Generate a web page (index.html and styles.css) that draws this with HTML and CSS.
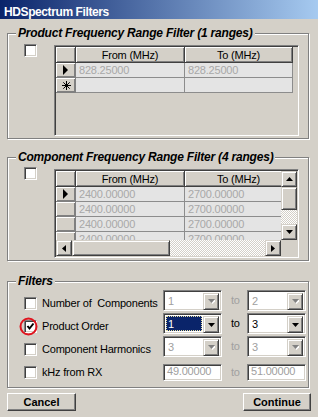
FILE: index.html
```html
<!DOCTYPE html>
<html>
<head>
    <title>HDSpectrum Filters</title>
    <link rel="stylesheet" href="styles.css">
</head>
<body>
<div class="window">
    <div class="titlebar">HDSpectrum Filters</div>

    <div class="content">
        <div class="group group-product">
            <span class="legend">Product Frequency Range Filter (1 ranges)</span>
            <div class="group-row">
                <span class="check"></span>
                <div class="grid grid-product">
                    <div class="table">
                        <div class="hd"></div>
                        <div class="hd">From (MHz)</div>
                        <div class="hd">To (MHz)</div>
                        <div class="rh"><svg width="6" height="10" viewBox="0 0 6 10"><polygon points="0,0 5,5 0,10" fill="#000"/></svg></div>
                        <div class="cell">828.25000</div>
                        <div class="cell">828.25000</div>
                        <div class="rh"><svg width="9" height="9" viewBox="0 0 9 9"><path d="M4.5 0V9M0 4.5H9M1.3 1.3L7.7 7.7M7.7 1.3L1.3 7.7" stroke="#000" stroke-width="1"/></svg></div>
                        <div class="cell"></div>
                        <div class="cell"></div>
                    </div>
                </div>
            </div>
        </div>

        <div class="group group-comp">
            <span class="legend">Component Frequency Range Filter (4 ranges)</span>
            <div class="group-row">
                <span class="check"></span>
                <div class="grid grid-comp">
                    <div class="scroll-area">
                        <div class="viewport">
                            <div class="table">
                                <div class="hd"></div>
                                <div class="hd">From (MHz)</div>
                                <div class="hd">To (MHz)</div>
                                <div class="rh"><svg width="6" height="10" viewBox="0 0 6 10"><polygon points="0,0 5,5 0,10" fill="#000"/></svg></div>
                                <div class="cell">2400.00000</div>
                                <div class="cell">2700.00000</div>
                                <div class="rh"></div>
                                <div class="cell">2400.00000</div>
                                <div class="cell">2700.00000</div>
                                <div class="rh"></div>
                                <div class="cell">2400.00000</div>
                                <div class="cell">2700.00000</div>
                                <div class="rh"></div>
                                <div class="cell">2400.00000</div>
                                <div class="cell">2700.00000</div>
                            </div>
                        </div>
                        <div class="vscroll">
                            <span class="sbtn"><svg width="7" height="4" viewBox="0 0 7 4"><polygon points="3.5,0 7,4 0,4" fill="#000"/></svg></span>
                            <span class="thumb v-thumb"></span>
                            <span class="track"></span>
                            <span class="sbtn"><svg width="7" height="4" viewBox="0 0 7 4"><polygon points="0,0 7,0 3.5,4" fill="#000"/></svg></span>
                        </div>
                        <div class="hscroll">
                            <span class="sbtn"><svg width="4" height="7" viewBox="0 0 4 7"><polygon points="4,0 4,7 0,3.5" fill="#000"/></svg></span>
                            <span class="thumb h-thumb"></span>
                            <span class="track"></span>
                            <span class="sbtn"><svg width="4" height="7" viewBox="0 0 4 7"><polygon points="0,0 4,3.5 0,7" fill="#000"/></svg></span>
                        </div>
                        <div class="corner"></div>
                    </div>
                </div>
            </div>
        </div>

        <div class="group group-filters">
            <span class="legend">Filters</span>

            <div class="filter-row">
                <label class="opt"><span class="check"></span>Number of&nbsp; Components</label>
                <div class="combo disabled"><span class="val">1</span><span class="dd"><svg width="7" height="5" viewBox="0 0 7 5"><polygon points="1,1 8,1 4.5,5" fill="#fff"/><polygon points="0,0 7,0 3.5,4" fill="#808080"/></svg></span></div>
                <span class="to disabled">to</span>
                <div class="combo disabled"><span class="val">2</span><span class="dd"><svg width="7" height="5" viewBox="0 0 7 5"><polygon points="1,1 8,1 4.5,5" fill="#fff"/><polygon points="0,0 7,0 3.5,4" fill="#808080"/></svg></span></div>
            </div>

            <div class="filter-row">
                <label class="opt">
                    <span class="check checked">
                        <svg width="13" height="13" viewBox="0 0 13 13"><polyline points="3.5,6 5.5,8.5 9.5,3.5" fill="none" stroke="#000" stroke-width="2"/></svg>
                        <svg class="mark" width="21" height="21" viewBox="0 0 21 21"><circle cx="10.5" cy="10.5" r="8" fill="none" stroke="#e0141e" stroke-width="2"/></svg>
                    </span>Product Order
                </label>
                <div class="combo focused"><span class="sel">1</span><span class="dd"><svg width="7" height="4" viewBox="0 0 7 4"><polygon points="0,0 7,0 3.5,4" fill="#000"/></svg></span></div>
                <span class="to">to</span>
                <div class="combo"><span class="val">3</span><span class="dd"><svg width="7" height="4" viewBox="0 0 7 4"><polygon points="0,0 7,0 3.5,4" fill="#000"/></svg></span></div>
            </div>

            <div class="filter-row">
                <label class="opt"><span class="check"></span>Component Harmonics</label>
                <div class="combo disabled"><span class="val">3</span><span class="dd"><svg width="7" height="5" viewBox="0 0 7 5"><polygon points="1,1 8,1 4.5,5" fill="#fff"/><polygon points="0,0 7,0 3.5,4" fill="#808080"/></svg></span></div>
                <span class="to disabled">to</span>
                <div class="combo disabled"><span class="val">3</span><span class="dd"><svg width="7" height="5" viewBox="0 0 7 5"><polygon points="1,1 8,1 4.5,5" fill="#fff"/><polygon points="0,0 7,0 3.5,4" fill="#808080"/></svg></span></div>
            </div>

            <div class="filter-row">
                <label class="opt"><span class="check"></span>kHz from RX</label>
                <div class="field disabled">49.00000</div>
                <span class="to disabled">to</span>
                <div class="field disabled">51.00000</div>
            </div>
        </div>

        <div class="buttons">
            <button class="btn btn-cancel">Cancel</button>
            <button class="btn btn-continue">Continue</button>
        </div>
    </div>
</div>
</body>
</html>
```

FILE: styles.css
```css
* {
    box-sizing: border-box;
}
body {
    margin: 0;
    font-family: "Liberation Sans", Arial, sans-serif;
    font-size: 11px;
    letter-spacing: -0.2px;
    color: #000;
}
.window {
    width: 318px;
    height: 417px;
    background: #d4d0c8;
    overflow: hidden;
}
.titlebar {
    height: 19px;
    padding: 3px 0 0 4px;
    line-height: 19px;
    background: linear-gradient(to right, #0a246a, #a6caf0);
    color: #fff;
    font-size: 12px;
    font-weight: bold;
    letter-spacing: -0.4px;
    white-space: nowrap;
}
.content {
    padding: 0 7px;
}

/* etched group boxes */
.group {
    position: relative;
    width: 302px;
    border: 1px solid #808080;
    box-shadow: inset 1px 1px 0 #fff, 1px 1px 0 #fff;
}
.legend {
    position: absolute;
    top: -8px;
    left: 8px;
    padding: 0 2px;
    background: #d4d0c8;
    font-size: 12px;
    font-weight: bold;
    font-style: italic;
    line-height: 15px;
    letter-spacing: -0.2px;
    white-space: nowrap;
}
.group-product {
    margin-top: 14px;
    height: 106px;
    padding: 10px 0 0 16px;
}
.group-comp {
    margin-top: 18px;
    height: 104px;
    padding: 9px 0 0 16px;
}
.group-filters {
    margin-top: 20px;
    height: 107px;
    padding: 7px 0 0 16px;
}
.group-row {
    display: flex;
    align-items: flex-start;
    gap: 17px;
}

/* checkbox */
.check {
    position: relative;
    display: block;
    flex: none;
    width: 13px;
    height: 13px;
    background: #fff;
    border: 1px solid;
    border-color: #808080 #fff #fff #808080;
    box-shadow: inset 1px 1px 0 #404040, inset -1px -1px 0 #d4d0c8;
}
.check svg {
    position: absolute;
    left: -1px;
    top: -1px;
}
.check .mark {
    left: -7px;
    top: -5px;
}

/* data grids */
.grid {
    width: 245px;
    padding: 1px;
    border: 1px solid;
    border-color: #808080 #fff #fff #808080;
    box-shadow: inset 1px 1px 0 #404040, inset -1px -1px 0 #d4d0c8;
    background: #d4d0c8;
    overflow: hidden;
}
.grid-product {
    margin-top: 1px;
    height: 91px;
}
.grid-comp {
    margin-top: 2px;
    height: 89px;
}
.table {
    display: grid;
    grid-template-columns: 20px 109px 108px;
    grid-template-rows: 16px;
    grid-auto-rows: 15px;
    width: 237px;
}
.hd,
.rh {
    display: flex;
    align-items: center;
    justify-content: center;
    background: #d4d0c8;
    border-right: 1px solid #404040;
    border-bottom: 1px solid #404040;
    box-shadow: inset 1px 1px 0 #fff, inset -1px -1px 0 #808080;
    white-space: nowrap;
}
.rh {
    border-color: #808080;
}
.rh svg {
    margin-left: 1px;
}
.cell {
    padding-left: 3px;
    line-height: 14px;
    background: #e4e4e4;
    border-right: 1px solid #8c8c8c;
    border-bottom: 1px solid #8c8c8c;
    color: #a8a8a8;
    white-space: nowrap;
}
.scroll-area {
    display: grid;
    grid-template-columns: 225px 16px;
    grid-template-rows: 69px 16px;
}
.viewport {
    overflow: hidden;
}
.vscroll,
.hscroll {
    display: flex;
}
.vscroll {
    flex-direction: column;
}
.sbtn,
.thumb {
    display: flex;
    align-items: center;
    justify-content: center;
    flex: none;
    width: 16px;
    height: 16px;
    background: #d4d0c8;
    border: 1px solid;
    border-color: #d4d0c8 #404040 #404040 #d4d0c8;
    box-shadow: inset 1px 1px 0 #fff, inset -1px -1px 0 #808080;
}
.v-thumb {
    height: 23px;
}
.h-thumb {
    width: 98px;
}
.track {
    flex: 1;
    background: repeating-conic-gradient(#d4d0c8 0% 25%, #fff 0% 50%) 0 0 / 2px 2px;
}
.corner {
    background: #d4d0c8;
}

/* filter rows */
.filter-row {
    display: grid;
    grid-template-columns: 139px 59px 25px 59px;
    height: 23px;
    align-items: start;
}
.opt {
    display: flex;
    align-items: center;
    gap: 5px;
    margin-top: 8px;
    line-height: 13px;
    white-space: nowrap;
}
.combo {
    display: flex;
    height: 21px;
    margin-top: 1px;
    padding: 2px;
    background: #fff;
    border: 1px solid;
    border-color: #808080 #fff #fff #808080;
    box-shadow: inset 1px 1px 0 #404040, inset -1px -1px 0 #d4d0c8;
}
.val,
.sel {
    flex: 1;
    padding-left: 2px;
    line-height: 17px;
}
.sel {
    margin-right: 1px;
    background: #0a246a;
    color: #fff;
    outline: 1px dotted #e8e0a0;
    outline-offset: -1px;
}
.dd {
    display: flex;
    align-items: center;
    justify-content: center;
    width: 16px;
    height: 17px;
    background: #d4d0c8;
    border: 1px solid;
    border-color: #d4d0c8 #404040 #404040 #d4d0c8;
    box-shadow: inset 1px 1px 0 #fff, inset -1px -1px 0 #808080;
}
.disabled,
.disabled .val {
    color: #a0a0a0;
}
.to {
    padding-left: 9px;
    margin-top: 1px;
    line-height: 21px;
}
.field {
    height: 17px;
    margin-top: 6px;
    padding-left: 3px;
    line-height: 13px;
    background: #fff;
    border: 1px solid;
    border-color: #808080 #fff #fff #808080;
    box-shadow: inset 1px 1px 0 #404040, inset -1px -1px 0 #d4d0c8;
}
.filter-row:last-child .to {
    margin-top: 4px;
}

/* buttons */
.buttons {
    display: flex;
    justify-content: space-between;
    margin-top: 5px;
}
.btn {
    height: 18px;
    padding: 0;
    font-family: inherit;
    font-size: 11px;
    font-weight: bold;
    letter-spacing: 0;
    line-height: 15px;
    color: #000;
    background: #d4d0c8;
    border: 1px solid;
    border-color: #fff #404040 #404040 #fff;
    box-shadow: inset -1px -1px 0 #808080, inset 1px 1px 0 #d4d0c8;
}
.btn-cancel {
    width: 69px;
}
.btn-continue {
    width: 68px;
}
```
